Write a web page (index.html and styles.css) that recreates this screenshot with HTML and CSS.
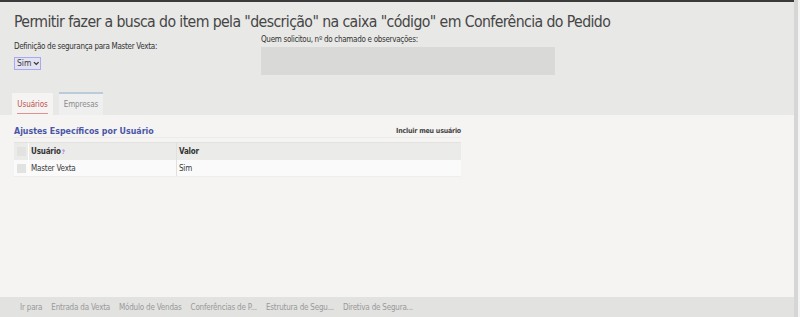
FILE: index.html
```html
<!DOCTYPE html>
<html lang="pt">
<head>
<meta charset="utf-8">
<link rel="stylesheet" href="styles.css">
</head>
<body>
<div class="frame">
  <div class="app">
    <div class="topline"></div>
    <div class="upper">
      <h1 class="title">Permitir fazer a busca do item pela "descrição" na caixa "código" em Conferência do Pedido</h1>
      <div class="fields">
        <div class="field-left">
          <label class="lbl">Definição de segurança para Master Vexta:</label>
          <div class="select">Sim <svg width="7" height="5" viewBox="0 0 7 5"><path d="M1 1 L3.5 3.5 L6 1" fill="none" stroke="#333" stroke-width="1.4"/></svg></div>
        </div>
        <div class="field-right">
          <label class="lbl">Quem solicitou, nº do chamado e observações:</label>
          <div class="textarea"></div>
        </div>
      </div>
      <div class="tabs">
        <div class="tab active"><span>Usuários</span></div>
        <div class="tab inactive"><span>Empresas</span></div>
      </div>
    </div>
    <div class="lower">
      <div class="section">
        <div class="section-head">
          <span class="section-title">Ajustes Específicos por Usuário</span>
          <span class="section-action">Incluir meu usuário</span>
        </div>
        <div class="table">
          <div class="row head">
            <div class="cell chk"><span class="box"></span></div>
            <div class="cell user">Usuário<sup class="q">?</sup></div>
            <div class="cell val">Valor</div>
          </div>
          <div class="row body">
            <div class="cell chk"><span class="box"></span></div>
            <div class="cell user">Master Vexta</div>
            <div class="cell val">Sim</div>
          </div>
        </div>
      </div>
    </div>
    <div class="footer">
      <span>Ir para</span>
      <span>Entrada da Vexta</span>
      <span>Módulo de Vendas</span>
      <span>Conferências de P...</span>
      <span>Estrutura de Segu...</span>
      <span>Diretiva de Segura...</span>
    </div>
  </div>
  <div class="scrollbar"><div class="thumb"></div></div>
</div>
</body>
</html>
```
FILE: styles.css
```css
* { box-sizing: border-box; }
html, body { margin: 0; padding: 0; height: 100%; overflow: hidden; }
body {
  font-family: "Liberation Sans Narrow", "DejaVu Sans Condensed", "Roboto", sans-serif;
  color: #3a3a3a;
  background: #f0f0f0;
}
.frame { display: flex; height: 317px; width: 800px; }
.app { width: 794px; display: flex; flex-direction: column; height: 100%; }
.topline { height: 2px; background: #3b3b3b; }
.upper { background: #e8e8e6; padding: 0 0 0 12px; display: flex; flex-direction: column; }
.title {
  margin: 10px 0 0 2px;
  font-weight: normal;
  font-size: 15.7px;
  letter-spacing: -0.6px;
  line-height: 20px;
  color: #454545;
}
.fields { display: flex; margin-top: 3px; padding-left: 2px; }
.field-left { width: 247px; display: flex; flex-direction: column; padding-top: 7px; }
.field-right { display: flex; flex-direction: column; }
.lbl { font-size: 8px; letter-spacing: -0.3px; line-height: 10px; color: #333; }
.select {
  margin-top: 5px;
  width: 27px; height: 13px;
  border: 1px solid #a9a9f2;
  background: #e2e2f2;
  font-size: 8.5px; line-height: 11px;
  padding-left: 2px;
  display: flex; align-items: center; gap: 2px;
}
.textarea { margin-top: 2px; width: 294px; height: 28px; background: #d9d9d8; }
.tabs { display: flex; gap: 6px; margin-top: 17px; height: 23px; align-items: flex-end; }
.tab { display: flex; align-items: center; justify-content: center; font-size: 8px; letter-spacing: -0.1px; }
.tab.active { width: 41px; height: 22px; background: #f5f4f2; color: #c0504e; }
.tab.active span { border-bottom: 1px solid #e09090; padding: 3px 0 4px; margin-top: 2px; }
.tab.inactive { width: 44px; height: 23px; background: #efefef; border-top: 2px solid #bccbd9; color: #8a8a8a; }
.lower { flex: 1; background: #f5f4f2; padding: 11px 0 0 14px; }
.section { width: 447px; }
.section-head {
  display: flex; justify-content: space-between; align-items: center;
  height: 12px; border-bottom: 1px solid #ebebea; padding-bottom: 1px;
}
.section-title { font-size: 8.8px; font-weight: bold; color: #4a56a6; }
.section-action { font-size: 7px; font-weight: bold; letter-spacing: -0.2px; color: #444; }
.table { margin-top: 4px; }
.row { display: flex; }
.row.head { height: 18px; background: #ebebea; border-top: 1px solid #e2e2e0; font-weight: bold; font-size: 8px; letter-spacing: -0.2px; color: #333; }
.row.body { height: 17px; background: #fafafa; border-bottom: 1px solid #eeeeec; font-size: 8px; letter-spacing: -0.2px; color: #3a3a3a; }
.cell { display: flex; align-items: center; }
.cell.chk { width: 15px; justify-content: center; border-right: 1px solid #fff; }
.cell.user { width: 148px; padding-left: 2px; border-right: 1px solid #e0e0de; }
.cell.val { padding-left: 2px; }
.box { width: 9px; height: 9px; background: #e2e2e0; display: block; }
.q { font-size: 6px; color: #9a8ad0; vertical-align: top; margin-left: 1px; }
.footer {
  height: 20px; background: #e2e2e0;
  display: flex; align-items: center; gap: 9px;
  padding-left: 20px; font-size: 8px; letter-spacing: -0.2px; color: #999;
}
.scrollbar { width: 6px; background: #f4f4f4; display: flex; }
.thumb { width: 4px; background: #d6d6d4; height: 100%; }
```
